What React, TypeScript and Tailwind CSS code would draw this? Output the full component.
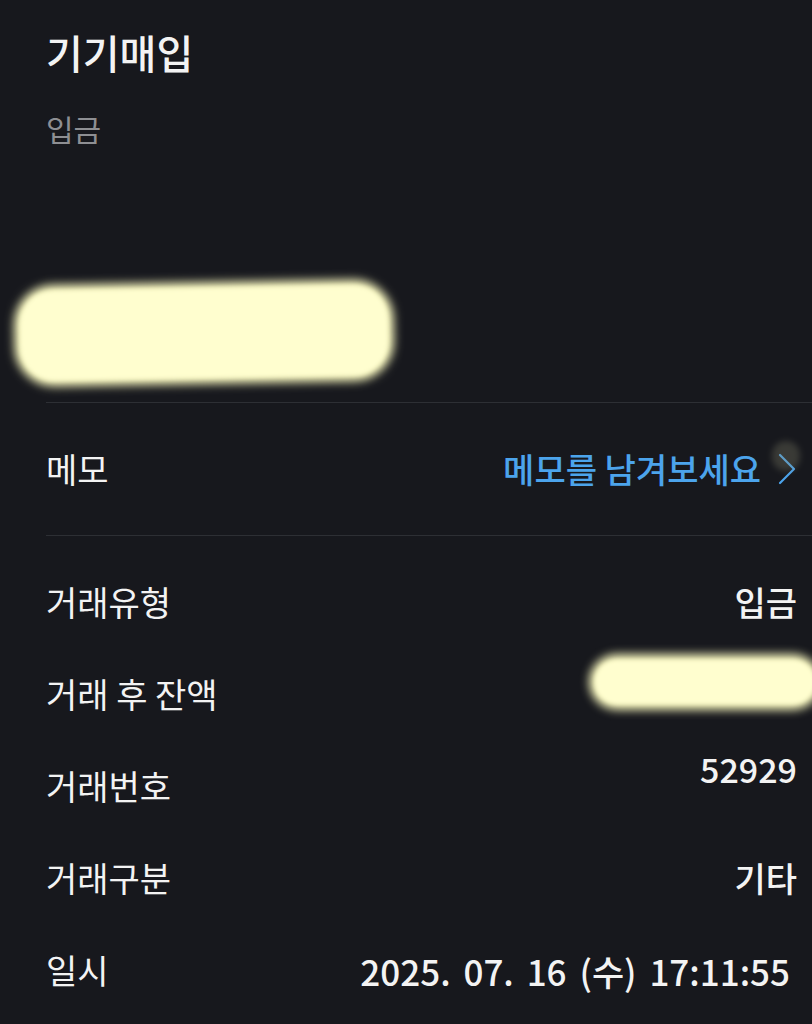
import React from 'react'

const rows = [
  { label: '거래유형', value: '입금' },
  { label: '거래 후 잔액', value: null },
  { label: '거래번호', value: '52929', raised: true },
  { label: '거래구분', value: '기타' },
  { label: '일시', value: '2025. 07. 16 (수) 17:11:55', date: true },
]

function Scribble({ className }: { className: string }) {
  return (
    <div className={'relative ' + className}>
      <div className="absolute inset-0 rounded-[40px] bg-[#efeeb8] blur-[5px]" />
      <div className="absolute inset-[6px] rounded-[34px] bg-[#fffecf] blur-[2px]" />
    </div>
  )
}

export default function App() {
  return (
    <div
      className="min-h-[1024px] w-full overflow-hidden bg-[#17181d] pl-[46px] text-[#f3f3f3]"
      style={{ fontFamily: '"Noto Sans CJK KR", "Noto Sans", sans-serif' }}
    >
      {/* Header */}
      <h1 className="pt-[28px] text-[40px] font-medium leading-[48px]">기기매입</h1>
      <p className="mt-[34px] text-[30px] leading-[36px] text-[#8e8f93]">입금</p>

      {/* Amount (redacted) */}
      <div className="flex h-[256px] items-end pb-[18px]">
        <Scribble className="-ml-[32px] h-[102px] w-[380px] -rotate-1" />
      </div>

      {/* Memo */}
      <div className="border-t border-[#2d2f34]">
        <div className="relative flex h-[132px] items-center justify-between pr-[15px]">
          <span className="text-[34px] leading-none">메모</span>
          <div className="flex items-center gap-[16px] text-[#4ca4ec]">
            <span className="text-[34px] font-medium leading-none">메모를 남겨보세요</span>
            <svg width="20" height="32" viewBox="0 0 20 32" fill="none">
              <polyline points="3,2 17,16 3,30" stroke="#4ca4ec" strokeWidth="2.2" strokeLinecap="round" strokeLinejoin="round" />
            </svg>
          </div>
          <div className="absolute right-[12px] top-[38px] h-[30px] w-[28px] rounded-full bg-[#8a8a70] opacity-30 blur-[3px]" />
        </div>
      </div>

      {/* Details */}
      <div className="border-t border-[#2d2f34] pt-[20px]">
        {rows.map((row) => (
          <div key={row.label} className="flex h-[92px] items-center justify-between pr-[15px]">
            <span className="text-[34px] leading-none">{row.label}</span>
            {row.value === null ? (
              <Scribble className="-mr-[24px] mb-[24px] h-[56px] w-[232px]" />
            ) : row.date ? (
              <span className="mr-[7px] text-[35px] font-medium leading-none [word-spacing:5px]">{row.value}</span>
            ) : (
              <span className={'text-[34px] font-medium leading-none ' + (row.raised ? 'mb-[34px]' : '')}>{row.value}</span>
            )}
          </div>
        ))}
      </div>
    </div>
  )
}
